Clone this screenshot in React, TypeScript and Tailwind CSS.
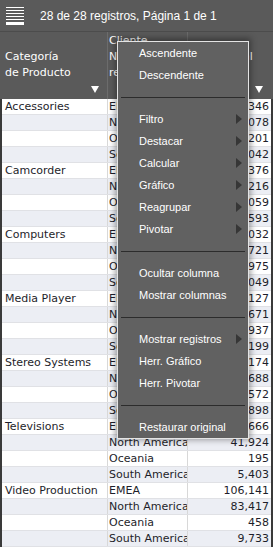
import React from 'react';

const regions = ['EMEA', 'North America', 'Oceania', 'South America'];
const groups = [
  { cat: 'Accessories', vals: ['52,346', '48,078', '6,201', '9,042'] },
  { cat: 'Camcorder', vals: ['83,376', '61,216', '8,059', '14,593'] },
  { cat: 'Computers', vals: ['95,032', '72,721', '975', '12,049'] },
  { cat: 'Media Player', vals: ['41,127', '35,671', '2,937', '6,199'] },
  { cat: 'Stereo Systems', vals: ['66,174', '54,688', '3,572', '8,898'] },
  { cat: 'Televisions', vals: ['51,666', '41,924', '195', '5,403'] },
  { cat: 'Video Production', vals: ['106,141', '83,417', '458', '9,733'] },
];

type MenuEntry = { label: string; arrow?: boolean } | 'sep';
const menu: MenuEntry[] = [
  { label: 'Ascendente' },
  { label: 'Descendente' },
  'sep',
  { label: 'Filtro', arrow: true },
  { label: 'Destacar', arrow: true },
  { label: 'Calcular', arrow: true },
  { label: 'Gráfico', arrow: true },
  { label: 'Reagrupar', arrow: true },
  { label: 'Pivotar', arrow: true },
  'sep',
  { label: 'Ocultar columna' },
  { label: 'Mostrar columnas' },
  'sep',
  { label: 'Mostrar registros', arrow: true },
  { label: 'Herr. Gráfico' },
  { label: 'Herr. Pivotar' },
  'sep',
  { label: 'Restaurar original' },
];

function DownTri() {
  return (
    <svg width="8" height="7" viewBox="0 0 8 7">
      <polygon points="0,0 8,0 4,7" fill="#ffffff" />
    </svg>
  );
}

function RightTri() {
  return (
    <svg width="6" height="10" viewBox="0 0 6 10">
      <polygon points="0,0 6,5 0,10" fill="#363636" />
    </svg>
  );
}

export default function App() {
  return (
    <div className="relative w-[273px] h-[547px] overflow-hidden bg-white font-['DejaVu_Sans',sans-serif]">
      {/* toolbar */}
      <div className="h-[32px] bg-[#5a5a5a] border-b border-[#4c4c4c] flex items-center">
        <div className="ml-[6px] w-[18px] flex flex-col gap-[2px]">
          <div className="h-px bg-white" />
          <div className="h-px bg-white" />
          <div className="h-px bg-white" />
          <div className="h-px bg-white" />
          <div className="h-px bg-white" />
          <div className="h-[3px] bg-white" />
        </div>
        <span className="ml-[16px] text-[12px] text-white font-['Liberation_Sans',Arial,sans-serif]">
          28 de 28 registros, Página 1 de 1
        </span>
      </div>

      {/* header */}
      <div className="h-[67px] bg-[#5a5a5a] flex text-white text-[11px] leading-[16px]">
        <div className="w-[108px] border-r border-[#6c6c6c] flex flex-col">
          <div className="flex-1 flex flex-col justify-end pl-[5px]">
            <span>Categoría</span>
            <span>de Producto</span>
          </div>
          <div className="h-[18px] flex justify-end items-start pt-[5px] pr-[8px]">
            <DownTri />
          </div>
        </div>
        <div className="w-[80px] border-r border-[#6c6c6c] flex flex-col overflow-hidden">
          <div className="flex-1 flex flex-col justify-end pl-[1px] whitespace-nowrap">
            <span>Cliente</span>
            <span>Nombre de</span>
            <span>región</span>
          </div>
          <div className="h-[18px] flex justify-end items-start pt-[5px] pr-[8px]">
            <DownTri />
          </div>
        </div>
        <div className="flex-1 flex flex-col overflow-hidden">
          <div className="flex-1 flex flex-col justify-end pl-[2px] whitespace-nowrap">
            <span>Monto total</span>
            <span>ventas</span>
          </div>
          <div className="h-[18px] flex justify-end items-start pt-[5px] pr-[10px]">
            <DownTri />
          </div>
        </div>
      </div>

      {/* body */}
      <div className="border-l-2 border-r-2 border-[#3a3a3a] text-[11px] leading-[15px] text-[#1e1e2a]">
        {groups.map((g) =>
          regions.map((r, i) => (
            <div
              key={g.cat + r}
              className={`h-[16px] flex border-b border-[#e0e1e5] ${i % 2 === 0 ? 'bg-white' : 'bg-[#eceef4]'}`}
            >
              <div className="w-[106px] border-r border-[#d8d8d8] pl-[3px] whitespace-nowrap overflow-hidden">
                {i === 0 ? g.cat : ''}
              </div>
              <div className="w-[80px] border-r border-[#d8d8d8] pl-[1px] whitespace-nowrap overflow-hidden">
                {r}
              </div>
              <div className="flex-1 text-right pr-[2px] whitespace-nowrap overflow-hidden">{g.vals[i]}</div>
            </div>
          ))
        )}
      </div>

      {/* context menu */}
      <div className="absolute left-[117px] top-[41px] w-[132px] bg-[#616161] border border-[#e4e4e4] shadow-[0_-1px_6px_2px_rgba(0,0,0,0.35)] font-['Liberation_Sans',Arial,sans-serif] text-[11px] text-white">
        {menu.map((m, idx) =>
          m === 'sep' ? (
            <div key={idx} className="h-[22px] flex items-center px-[3px]">
              <div className="h-px w-full bg-[#2c2c2c]" />
            </div>
          ) : (
            <div key={idx} className="h-[22px] flex items-center pl-[21px] pr-[6px]">
              <span>{m.label}</span>
              {m.arrow ? (
                <span className="ml-auto flex">
                  <RightTri />
                </span>
              ) : null}
            </div>
          )
        )}
      </div>
    </div>
  );
}
